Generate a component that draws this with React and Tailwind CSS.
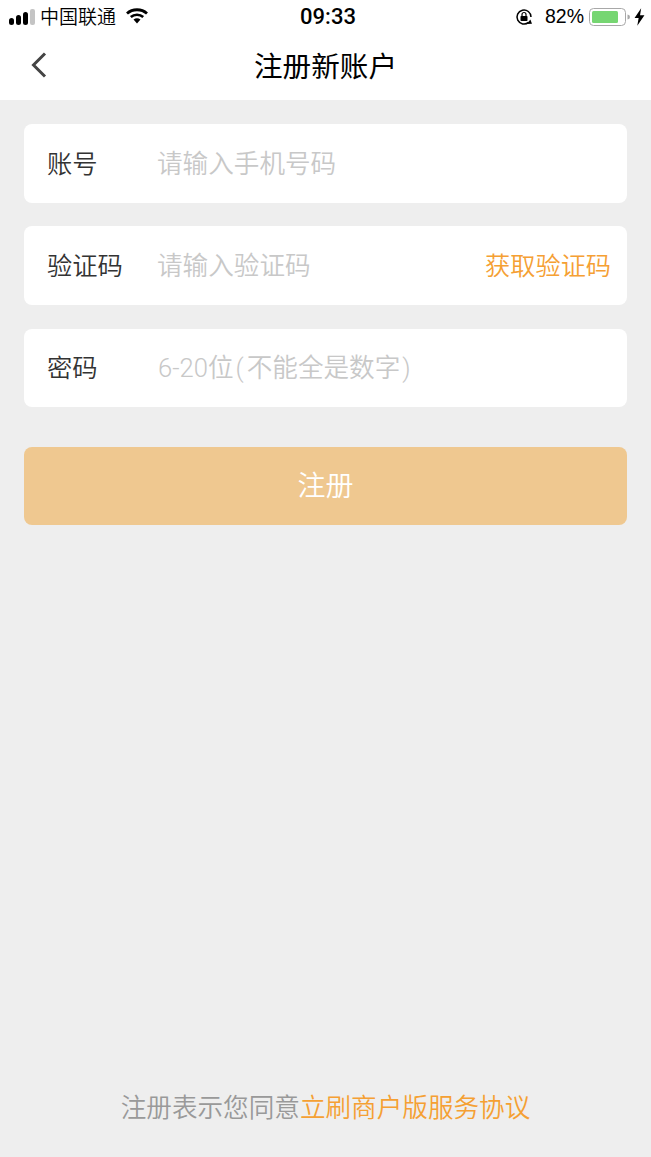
const cjk = { fontFamily: '"Liberation Sans", "Noto Sans CJK SC", sans-serif' };

function Row({ label, placeholder, action }) {
  return (
    <div className="flex h-[78.6px] items-center rounded-[8px] bg-white pt-[2px] pl-[23px] pr-[16px]">
      <span className="w-[110px] shrink-0 text-[25.3px] font-[350] leading-none text-[#333333]">{label}</span>
      <span className="flex-1 text-[25.6px] font-[350] leading-none text-[#c8c8c8]">{placeholder}</span>
      {action && <span className="text-[25.2px] font-[350] leading-none text-[#f5a033]">{action}</span>}
    </div>
  );
}

export default function App() {
  return (
    <div className="flex h-[1157px] w-[651px] flex-col overflow-hidden bg-[#eeeeee]" style={cjk}>
      <div className="bg-white">
        <div className="flex h-[33px] items-center justify-between pl-[9px] pr-[6px] text-black">
          <div className="flex w-[240px] items-center">
            <svg width="26" height="16" viewBox="0 0 26 16" className="shrink-0">
              <rect x="0" y="9" width="5" height="7" rx="2.5" fill="#000" />
              <rect x="7" y="6" width="5" height="10" rx="2.5" fill="#000" />
              <rect x="14" y="3" width="5" height="13" rx="2.5" fill="#000" />
              <rect x="21" y="0" width="5" height="16" rx="2" fill="#c4c4c4" />
            </svg>
            <span className="ml-[5px] pt-[2px] text-[19px] font-[350] leading-none">中国联通</span>
            <svg width="22" height="16" viewBox="0 0 22 16" className="ml-[10px] mb-[2px] shrink-0">
              <path d="M1 5.5C6.5 0.5 15.5 0.5 21 5.5" fill="none" stroke="#000" strokeWidth="2.8" />
              <path d="M4.8 9C8.2 6 13.8 6 17.2 9" fill="none" stroke="#000" strokeWidth="2.6" />
              <path d="M7.5 11.5C9.8 9.8 12.2 9.8 14.5 11.5L11 15.5Z" fill="#000" />
            </svg>
          </div>
          <span className="ml-[2px] font-['Roboto'] text-[22px] font-medium leading-none">09:33</span>
          <div className="flex w-[240px] items-center justify-end">
            <svg width="18" height="18" viewBox="0 0 18 18" className="shrink-0">
              <path d="M16 9A7 7 0 1 0 13.5 14.4" fill="none" stroke="#000" strokeWidth="1.5" />
              <path d="M17 15.8L11.8 16L15.4 11.6Z" fill="#000" />
              <rect x="5.5" y="8" width="7" height="5" rx="0.8" fill="#000" />
              <path d="M7 8V6.5a2 2 0 0 1 4 0V8" fill="none" stroke="#000" strokeWidth="1.2" />
            </svg>
            <span className="ml-[12px] text-[19.5px] leading-none">82%</span>
            <svg width="42" height="18" viewBox="0 0 42 18" className="ml-[5px] shrink-0">
              <rect x="0.5" y="0.5" width="36" height="17" rx="4" fill="none" stroke="#a8a8a8" />
              <rect x="3" y="3" width="26" height="12" rx="1.5" fill="#76d672" />
              <path d="M38.5 6.5a2.5 2.5 0 0 1 0 5Z" fill="#a8a8a8" />
            </svg>
            <svg width="11" height="18" viewBox="0 0 10 16" className="ml-[3px] shrink-0">
              <path d="M6.5 0L0.5 9H4.2L3 16L9.5 6.5H5.5Z" fill="#000" />
            </svg>
          </div>
        </div>
        <div className="relative flex h-[67px] items-center justify-center pt-[2px]">
          <svg width="18" height="28" viewBox="0 0 18 28" className="absolute left-[30px] top-[18px]">
            <path d="M15 2.5L3.5 14L15 25.5" fill="none" stroke="#444444" strokeWidth="3" />
          </svg>
          <span className="text-[28.6px] leading-none text-black">注册新账户</span>
        </div>
      </div>
      <div className="flex flex-1 flex-col px-6 pt-6">
        <div className="flex flex-col gap-[23.8px]">
          <Row label="账号" placeholder="请输入手机号码" />
          <Row label="验证码" placeholder="请输入验证码" action="获取验证码" />
          <Row
            label="密码"
            placeholder={
              <span className="ml-[1px] font-['Roboto','Noto_Sans_CJK_SC',sans-serif]">
                6-20位<span className="ml-[2px] mr-[3px]">(</span>不能全是数字<span className="mx-[2px]">)</span>
              </span>
            }
          />
        </div>
        <div className="mt-[39.6px] flex h-[78px] items-center justify-center rounded-[8px] bg-[#efc890] pt-[2px] text-[28px] font-[350] leading-none text-white">注册</div>
        <div className="mt-auto mb-[35px] text-center text-[25.6px] font-[350] leading-none text-[#999999]">
          注册表示您同意<span className="text-[#f5a033]">立刷商户版服务协议</span>
        </div>
      </div>
    </div>
  );
}
